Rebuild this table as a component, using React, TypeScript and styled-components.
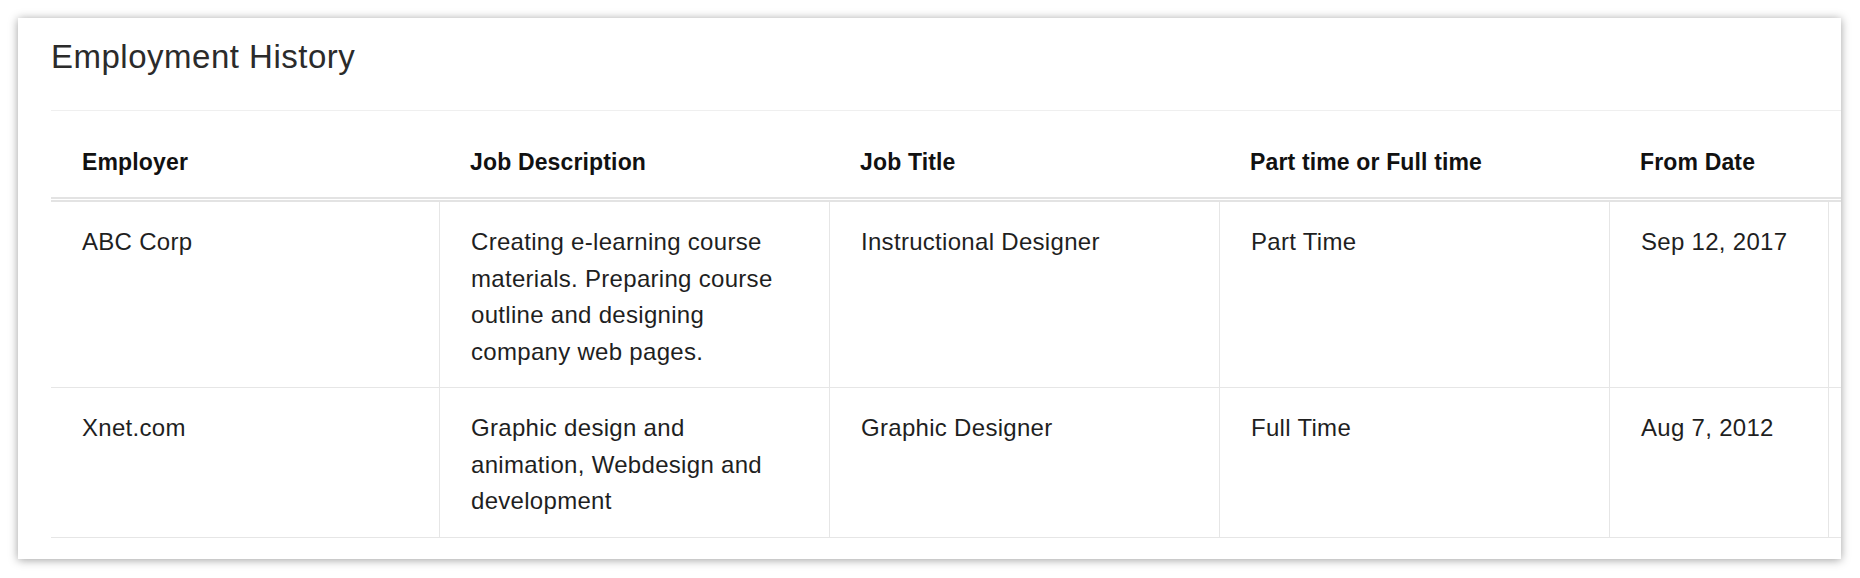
import React from "react";
import styled, { createGlobalStyle } from "styled-components";

type Job = {
  employer: string;
  description: string;
  title: string;
  kind: string;
  from: string;
  to: string;
};

const jobs: Job[] = [
  {
    employer: "ABC Corp",
    description:
      "Creating e-learning course\nmaterials. Preparing course\noutline and designing\ncompany web pages.",
    title: "Instructional Designer",
    kind: "Part Time",
    from: "Sep 12, 2017",
    to: "",
  },
  {
    employer: "Xnet.com",
    description:
      "Graphic design and\nanimation, Webdesign and\ndevelopment",
    title: "Graphic Designer",
    kind: "Full Time",
    from: "Aug 7, 2012",
    to: "",
  },
];

// the last column runs past the card edge and is clipped, as in the app
const columns = [
  { key: "employer", label: "Employer", width: 388 },
  { key: "desc", label: "Job Description", width: 390 },
  { key: "title", label: "Job Title", width: 390 },
  { key: "kind", label: "Part time or Full time", width: 390 },
  { key: "from", label: "From Date", width: 219 },
  { key: "to", label: "", width: 220 },
];

const GlobalStyle = createGlobalStyle`
  body {
    margin: 0;
    background: #ffffff;
    font-family: "Liberation Sans", Arial, sans-serif;
  }
`;

const Page = styled.div`
  padding: 18px 19px 18px 18px;
`;

const Card = styled.section`
  height: 541px;
  box-sizing: border-box;
  background: #ffffff;
  box-shadow: 0 1px 9px rgba(0, 0, 0, 0.38);
  padding: 0 0 0 33px;
  overflow: hidden;
`;

const Heading = styled.h2`
  margin: 0;
  padding: 20px 0 0;
  height: 93px;
  box-sizing: border-box;
  border-bottom: 1px solid #efefef;
  font-size: 33px;
  font-weight: normal;
  letter-spacing: 0.5px;
  line-height: 38px;
  color: #2b2b2b;
`;

const Table = styled.table`
  border-collapse: separate;
  border-spacing: 0;
  table-layout: fixed;
  width: ${columns.reduce((s, c) => s + c.width, 0)}px;
`;

const HeadCell = styled.th`
  text-align: left;
  padding: 38px 31px 22px;
  font-size: 23px;
  letter-spacing: 0.15px;
  line-height: 26px;
  font-weight: bold;
  color: #111111;
  border-bottom: 5px double #e3e3e3;
  white-space: nowrap;
`;

const Cell = styled.td`
  vertical-align: top;
  padding: 22px 31px 17px;
  font-size: 24px;
  letter-spacing: 0.3px;
  line-height: 36.5px;
  color: #1f1f1f;
  white-space: pre-line;
  border-bottom: 1px solid #e6e6e6;

  & + & {
    border-left: 1px solid #e6e6e6;
  }
`;

export default function App() {
  return (
    <>
      <GlobalStyle />
      <Page>
        <Card>
          <Heading>Employment History</Heading>
          <Table>
            <colgroup>
              {columns.map((c) => (
                <col key={c.key} style={{ width: c.width }} />
              ))}
            </colgroup>
            <thead>
              <tr>
                {columns.map((c) => (
                  <HeadCell key={c.key}>{c.label}</HeadCell>
                ))}
              </tr>
            </thead>
            <tbody>
              {jobs.map((j) => (
                <tr key={j.employer}>
                  <Cell>{j.employer}</Cell>
                  <Cell>{j.description}</Cell>
                  <Cell>{j.title}</Cell>
                  <Cell>{j.kind}</Cell>
                  <Cell>{j.from}</Cell>
                  <Cell>{j.to}</Cell>
                </tr>
              ))}
            </tbody>
          </Table>
        </Card>
      </Page>
    </>
  );
}
